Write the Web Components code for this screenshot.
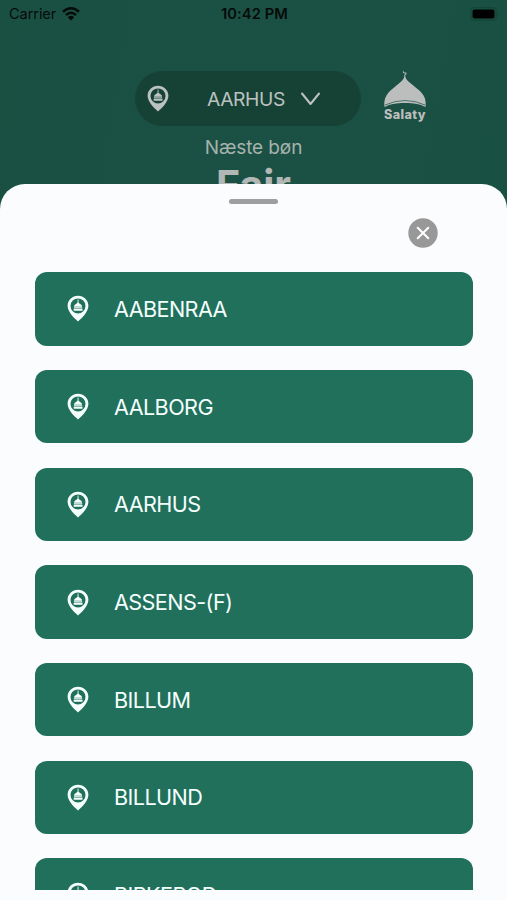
<!DOCTYPE html>
<html lang="da"><head><meta charset="utf-8"><title>Salaty</title>
<style>html,body{margin:0;height:100%;overflow:hidden}body{font-family:Inter,"Liberation Sans",sans-serif;background:#fafcfe}</style></head>
<body><salaty-app></salaty-app>
<script>
const define=(name,html)=>{
  const t=document.createElement('template');t.innerHTML=html;
  customElements.define(name,class extends HTMLElement{
    constructor(){super();this.attachShadow({mode:'open'}).append(t.content.cloneNode(true));}
  });
};
define('mosque-pin',`<style>:host{display:block;width:22px;height:27px}svg{display:block;width:100%;height:100%}</style>
<svg viewBox="0 0 22 27"><path fill="currentColor" fill-rule="evenodd" d="M11 .7C5.2.7.6 5.1.6 10.8c0 3.1 1.6 6 3.8 8.9 1.8 2.3 4.2 4.5 6.6 6.7 2.4-2.2 4.8-4.4 6.6-6.7 2.2-2.9 3.8-5.8 3.8-8.9C21.4 5.1 16.8.7 11 .7Zm0 2.7a7.5 7.5 0 1 1 0 15 7.5 7.5 0 0 1 0-15Z"/><path fill="currentColor" d="M10.6 4.6h.9v2.8c.2.9 1.4 1.3 2.4 2 .8.6 1.2 1.3 1.2 2.4H7c0-1.1.4-1.8 1.2-2.4 1-.7 2.2-1.1 2.4-2ZM6.9 12.3h8.3v.9H6.9zM6.7 13.8h8.8v2H6.7z"/></svg>`);
define('status-bar',`<style>:host{display:grid;grid-template-columns:1fr auto 1fr;align-items:center;height:27px;padding:0 7px 1px 9px;color:#050b09;font-size:14.5px}
.l{display:flex;align-items:center;gap:6px}.l span{letter-spacing:-.05px}b{font-weight:600;font-size:14.7px;letter-spacing:.1px}.w{width:18px;height:14px}.b{justify-self:end;width:30px;height:14px}</style>
<div class="l"><span>Carrier</span><svg class="w" viewBox="0 0 18 14"><g fill="none" stroke="currentColor" stroke-width="2.5"><path d="M1 4.8Q9-2.2 17 4.8M4 8Q9 3.6 14 8"/></g><path fill="currentColor" d="M5.8 10.2Q9 7.5 12.2 10.2L9 13.6Z"/></svg></div><b>10:42 PM</b>
<svg class="b" viewBox="0 0 30 14"><rect x=".7" y=".7" width="25.6" height="12.6" rx="3.8" fill="none" stroke="#154537" stroke-width="1.3"/><rect x="2.5" y="2.5" width="22" height="9" rx="2" fill="#000"/><path d="M28 5q1.5 2 0 4z" fill="#113c2f"/></svg>`);
define('city-picker',`<style>:host{display:flex;align-items:center;box-sizing:border-box;width:226px;height:55px;border-radius:28px;background:#164235;padding-left:12px;color:#bcc2c0}
.t{margin-left:38px;width:80px;font-size:19.3px;letter-spacing:-.4px;white-space:nowrap}.c{margin-left:12px;width:22px;height:16px}</style>
<mosque-pin></mosque-pin><span class="t"><slot></slot></span><svg class="c" viewBox="0 0 22 16"><path d="M3 2.5 11.5 13 20 2.5" fill="none" stroke="currentColor" stroke-width="2" stroke-linecap="round" stroke-linejoin="round"/></svg>`);
define('salaty-logo',`<style>:host{display:flex;flex-direction:column;align-items:center;width:44px;color:#bcbebd}svg{width:44px;height:40px}span{font-size:12.6px;line-height:14px;font-weight:800;letter-spacing:.4px;margin-top:-1px}</style>
<svg viewBox="0 0 44 40"><path fill="currentColor" d="M20.3 1.2C19 3.2 20.5 5 22.5 4.3 22.2 5.3 21.8 5.7 21.4 5.8L21.2 8C20.4 13 8 19.2 3.6 26.2 1.3 30 1 33.5 1.5 38 10 32.5 34 32.5 42.5 38 43 33.5 42.7 30 40.4 26.2 36 19.2 23.2 13 22.4 8L22.2 5.9C24 5.3 23.8 4 23 3.4 21.5 4 20.2 3 20.3 1.2Z"/><path d="M2 36Q22 27 42 36" fill="none" stroke="#1b5143" stroke-width=".7"/></svg><span><slot></slot></span>`);
define('app-header',`<style>:host{display:block;height:215px;overflow:hidden;background:linear-gradient(100deg,#1a5042,#1b5145 60%,#185042);color:#a6b2ad}
.r{display:flex;margin:41px 0 0 135px;height:60px}city-picker{margin-top:2px}salaty-logo{margin-left:22px}.n,.f{text-align:center}.n{font-size:19px;line-height:24px;margin-top:7px;letter-spacing:-.1px}.f{font-size:41px;line-height:40px;margin-top:5px;font-weight:700;color:#b2b7b5}</style>
<status-bar></status-bar><div class="r"><city-picker>AARHUS</city-picker><salaty-logo>Salaty</salaty-logo></div><div class="n">Næste bøn</div><div class="f">Fajr</div>`);
define('city-card',`<style>:host{display:flex;flex:none;align-items:center;height:73.4px;border-radius:12px;background:#20705c;color:#f5fffc;padding-left:32px;font-size:21.6px;letter-spacing:-.58px}
span{margin-left:25px}</style><mosque-pin></mosque-pin><span><slot></slot></span>`);
define('city-sheet',`<style>:host{display:block;position:absolute;inset:184px 0 0;background:#fafcfe;border-radius:25px 25px 0 0;overflow:hidden}
.g{width:49px;height:5px;border-radius:3px;background:#9d9e9f;margin:15px auto 0}.x{display:block;width:30px;height:30px;margin:14px 0 0 408px}
.list{display:flex;flex-direction:column;gap:24.3px;margin-top:24.3px;padding:0 34.5px 0 35px;height:617.7px;overflow:hidden}</style>
<div class="g"></div><svg class="x" viewBox="0 0 30 30"><circle cx="15" cy="15" r="14.7" fill="#989899"/><path d="m9.7 9.7 10.6 10.6m0-10.6L9.7 20.3" stroke="#fff" stroke-width="2" stroke-linecap="round"/></svg>
<div class="list"><slot></slot></div>`);
define('salaty-app',`<style>:host{display:block;position:relative;width:507px;height:900px;overflow:hidden}</style>
<app-header></app-header><city-sheet><city-card>AABENRAA</city-card><city-card>AALBORG</city-card><city-card>AARHUS</city-card><city-card>ASSENS-(F)</city-card><city-card>BILLUM</city-card><city-card>BILLUND</city-card><city-card>BIRKEROD</city-card></city-sheet>`);
</script></body></html>
